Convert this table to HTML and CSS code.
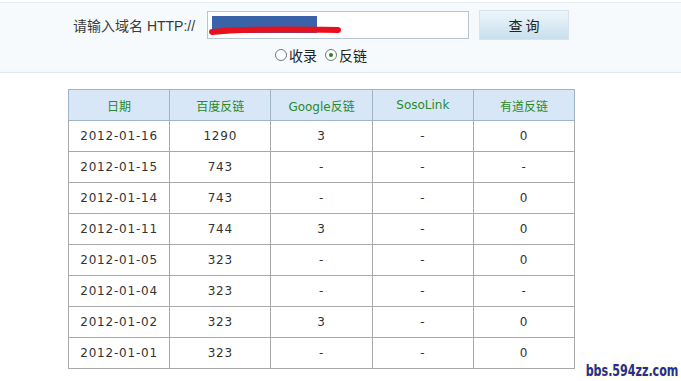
FILE: index.html
```html
<!DOCTYPE html>
<html>
<head>
<meta charset="utf-8">
<link rel="stylesheet" href="styles.css">
</head>
<body>
<div class="panel">
  <div class="search-row">
    <span class="label">请输入域名 HTTP://</span>
    <div class="input">
      <span class="sel"></span>
      <svg class="scribble" width="140" height="20" viewBox="0 0 140 20"><path d="M4 12 C30 9 70 9 130 10" stroke="#e8101c" stroke-width="6" fill="none" stroke-linecap="round"/></svg>
    </div>
    <button class="btn">查 询</button>
  </div>
  <div class="radio-row">
    <span class="radio"></span><span class="rl">收录</span>
    <span class="radio on"></span><span class="rl">反链</span>
  </div>
</div>
<table class="data">
  <thead>
    <tr><th>日期</th><th>百度反链</th><th>Google反链</th><th>SosoLink</th><th>有道反链</th></tr>
  </thead>
  <tbody>
    <tr><td>2012-01-16</td><td>1290</td><td>3</td><td>-</td><td>0</td></tr>
    <tr><td>2012-01-15</td><td>743</td><td>-</td><td>-</td><td>-</td></tr>
    <tr><td>2012-01-14</td><td>743</td><td>-</td><td>-</td><td>0</td></tr>
    <tr><td>2012-01-11</td><td>744</td><td>3</td><td>-</td><td>0</td></tr>
    <tr><td>2012-01-05</td><td>323</td><td>-</td><td>-</td><td>0</td></tr>
    <tr><td>2012-01-04</td><td>323</td><td>-</td><td>-</td><td>-</td></tr>
    <tr><td>2012-01-02</td><td>323</td><td>3</td><td>-</td><td>0</td></tr>
    <tr><td>2012-01-01</td><td>323</td><td>-</td><td>-</td><td>0</td></tr>
  </tbody>
</table>
<div class="mark">bbs.594zz.com</div>
</body>
</html>
```
FILE: styles.css
```css
html, body { margin: 0; padding: 0; background: #fff; }
body {
  width: 681px; height: 381px; overflow: hidden; position: relative;
  font-family: "DejaVu Sans", "Noto Sans CJK SC", sans-serif;
  color: #333;
}
.panel {
  margin-top: 2px;
  height: 69px;
  border-top: 1px solid #e6eef4;
  border-bottom: 1px solid #e2e9ee;
  background: #f7fafc;
}
.search-row {
  display: flex; align-items: center;
  padding-left: 73px; padding-top: 7px;
  height: 30px;
}
.label {
  font-family: "Liberation Sans", "Noto Sans CJK SC", sans-serif;
  font-size: 14px; color: #3a3a3a; width: 134px;
}
.input {
  position: relative;
  width: 260px; height: 26px;
  border: 1px solid #b9c5cd; background: #fff;
}
.sel {
  position: absolute; left: 4px; top: 4px; width: 105px; height: 17px;
  background: #3a62a8;
}
.scribble { position: absolute; left: 0; top: 8px; }
.btn {
  margin-left: 10px;
  width: 90px; height: 30px;
  border: 1px solid #d8e4ec;
  background: linear-gradient(#eef5fa, #c9dfee);
  font-family: "Noto Sans CJK SC", sans-serif;
  font-size: 14px; color: #222; padding: 0;
}
.radio-row {
  display: flex; align-items: center;
  padding-left: 275px; margin-top: 5px;
  font-family: "Noto Sans CJK SC", sans-serif; font-size: 14px; color: #222;
}
.radio {
  width: 10px; height: 10px; border-radius: 50%;
  border: 1px solid #6f7a80; background: #fff;
  display: inline-flex; align-items: center; justify-content: center;
}
.radio.on::after { content: ""; width: 4px; height: 4px; border-radius: 50%; background: #2f7d2f; }
.rl { margin-left: 2px; margin-right: 8px; }
.data {
  margin: 16px 0 0 68px;
  border-collapse: collapse;
  width: 507px;
  font-size: 12px;
  color: #333;
}
.data th, .data td {
  border: 1px solid #a9a9a9;
  text-align: center;
  height: 30px; padding: 0;
  width: 101px;
}
.data td { letter-spacing: 0.8px; }
.data th {
  background: #d7e7f7;
  color: #2a8a2a; font-weight: normal;
  font-family: "DejaVu Sans", "Noto Sans CJK SC", sans-serif;
  border-color: #a0b4c8;
}
.mark {
  position: absolute; right: 3px; bottom: 1px;
  font-family: "DejaVu Sans Condensed", "DejaVu Sans", sans-serif;
  font-weight: bold; font-size: 16px; color: #1f2f9c;
  text-shadow: 0 0 2px #fff3a0, 0 0 2px #fff3a0;
  transform: scaleX(0.77); transform-origin: right;
}
```
